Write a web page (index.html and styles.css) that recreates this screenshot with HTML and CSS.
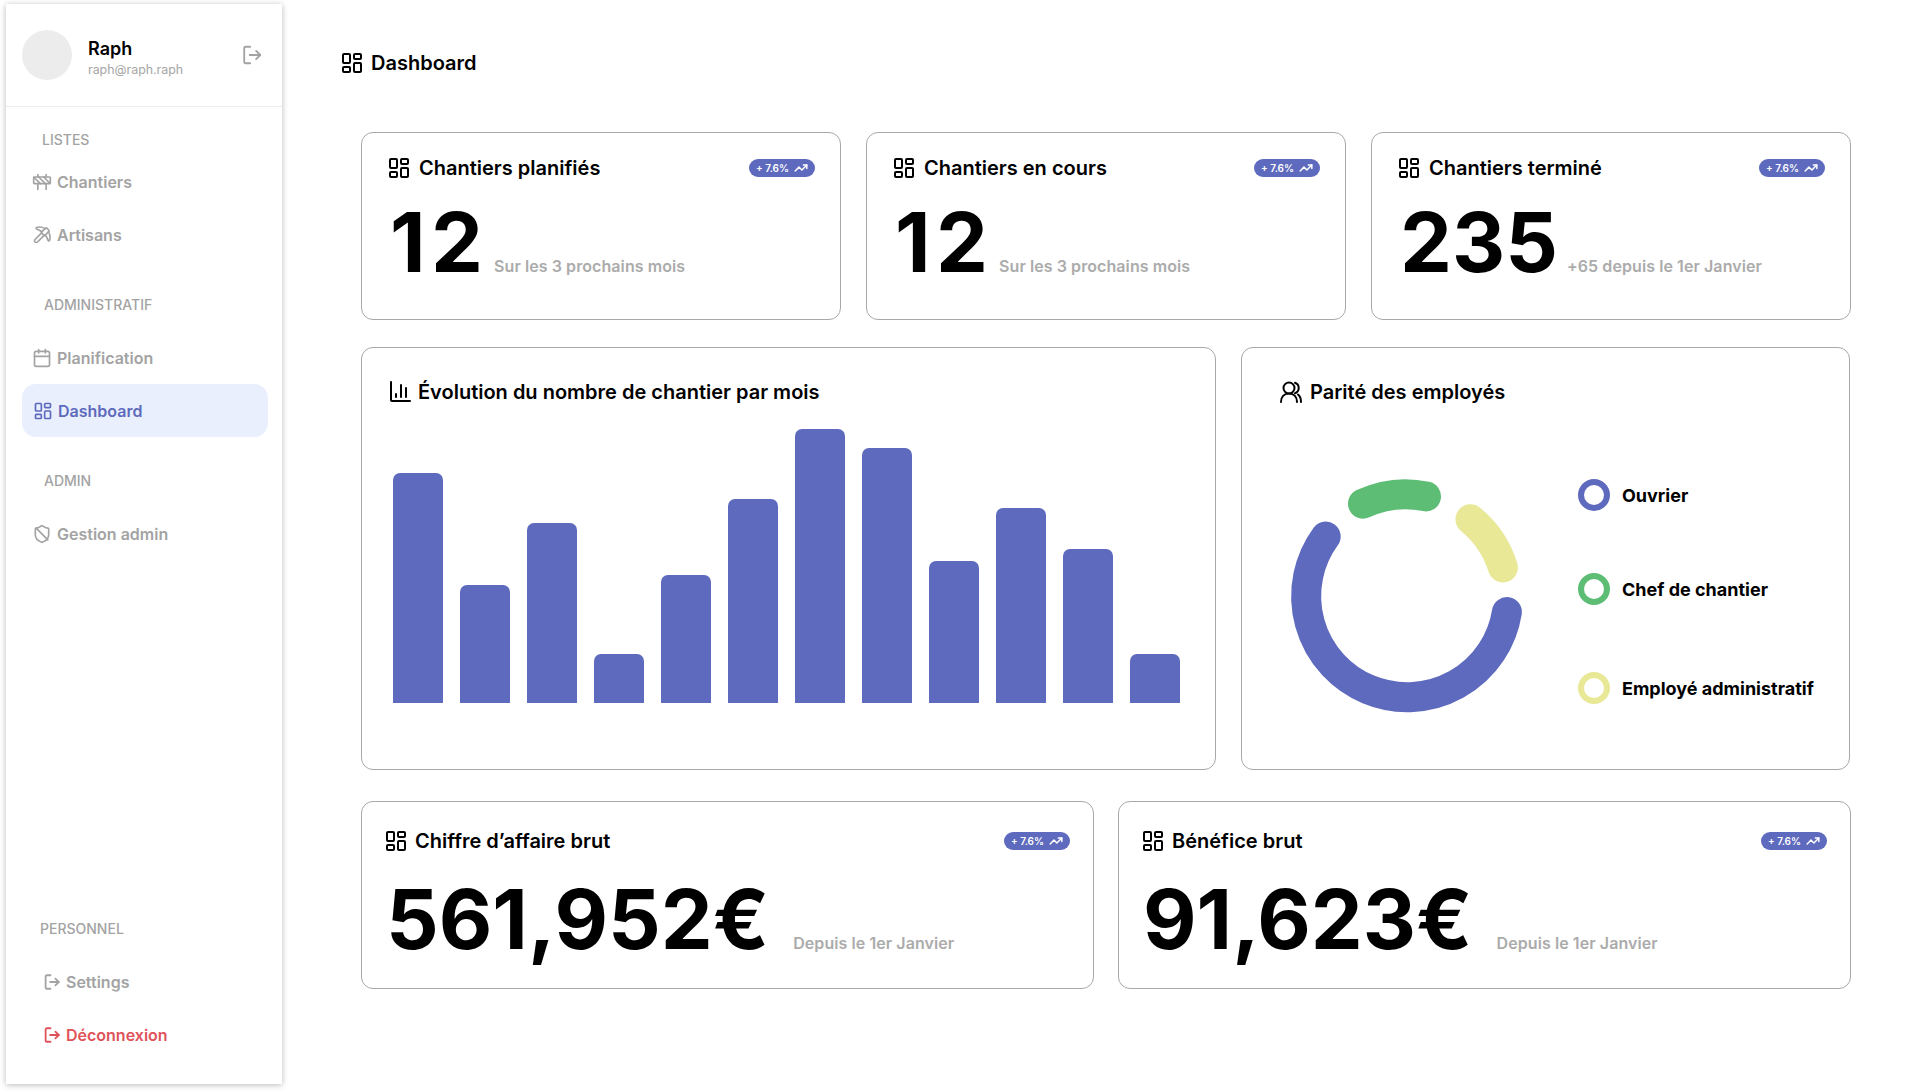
FILE: index.html
```html
<!DOCTYPE html>
<html lang="fr">
<head>
<meta charset="utf-8">
<title>Dashboard</title>
<link rel="stylesheet" href="styles.css">
</head>
<body>
<svg class="defs" width="0" height="0" aria-hidden="true">
  <symbol id="i-grid" viewBox="0 0 24 24"><rect x="3" y="3" width="7" height="9" rx="1"/><rect x="14" y="3" width="7" height="5" rx="1"/><rect x="14" y="12" width="7" height="9" rx="1"/><rect x="3" y="16" width="7" height="5" rx="1"/></symbol>
  <symbol id="i-logout" viewBox="0 0 24 24"><path d="M10 3H5a1.500 1.500 0 0 0-1.500 1.500v15A1.500 1.500 0 0 0 5 21h5"/><path d="M9.500 12H21"/><path d="M16.500 7.500 21 12l-4.500 4.500"/></symbol>
  <symbol id="i-barrier" viewBox="0 0 24 24"><rect x="2" y="6" width="20" height="8" rx="1"/><path d="M17 14v7"/><path d="M7 14v7"/><path d="M17 3v3"/><path d="M7 3v3"/><path d="M10 14 2.300 6.300"/><path d="m14 6 7.700 7.700"/><path d="m8 6 8 8"/></symbol>
  <symbol id="i-pick" viewBox="0 0 24 24"><path d="M14.531 12.469 6.619 20.380a1 1 0 1 1-3-3l7.912-7.912"/><path d="M15.686 4.314A12.500 12.500 0 0 0 5.461 2.958 1 1 0 0 0 5.580 4.710a22 22 0 0 1 6.318 3.393"/><path d="M17.700 3.700a1 1 0 0 0-1.400 0l-4.600 4.600a1 1 0 0 0 0 1.400l2.600 2.600a1 1 0 0 0 1.400 0l4.600-4.600a1 1 0 0 0 0-1.400z"/><path d="M19.686 8.314a12.501 12.501 0 0 1 1.356 10.225 1 1 0 0 1-1.751-.119 22 22 0 0 0-3.393-6.319"/></symbol>
  <symbol id="i-cal" viewBox="0 0 24 24"><rect x="3" y="4" width="18" height="18" rx="2"/><path d="M16 2v4"/><path d="M8 2v4"/><path d="M3 10h18"/></symbol>
  <symbol id="i-shield" viewBox="0 0 24 24"><path d="M20 13c0 5-3.500 7.500-7.660 8.950a1 1 0 0 1-.67-.01C7.500 20.500 4 18 4 13V6a1 1 0 0 1 1-1c2 0 4.500-1.200 6.240-2.720a1.170 1.170 0 0 1 1.520 0C14.510 3.810 17 5 19 5a1 1 0 0 1 1 1z"/><path d="M5 5l14 14"/></symbol>
  <symbol id="i-chart" viewBox="0 0 24 24"><path d="M3 2v18a1 1 0 0 0 1 1h18"/><path d="M8 17v-3"/><path d="M13 17V5"/><path d="M18 17V8"/></symbol>
  <symbol id="i-users" viewBox="0 0 24 24"><circle cx="10" cy="8" r="5.500"/><path d="M2 22c0-5 3-8.500 8-8.500s8 3.500 8 8.500"/><path d="M16 2.800a5.500 5.500 0 0 1 0 10.400"/><path d="M19 14.500c2 1.500 3 4.200 3 7.500"/></symbol>
  <symbol id="i-trend" viewBox="0 0 24 24"><path d="m22 7-8.500 8.500-5-5L2 17"/><path d="M16 7h6v6"/></symbol>
</svg>

<div class="page">
  <aside class="sidebar">
    <div class="profile">
      <div class="avatar"></div>
      <div class="who">
        <div class="who-name">Raph</div>
        <div class="who-mail">raph@raph.raph</div>
      </div>
      <svg class="ico ico-exit"><use href="#i-logout"/></svg>
    </div>

    <div class="nav-group group-listes">
      <div class="nav-label label-listes">LISTES</div>
      <a class="nav-item"><svg class="ico nav-ico"><use href="#i-barrier"/></svg>Chantiers</a>
      <a class="nav-item"><svg class="ico nav-ico"><use href="#i-pick"/></svg>Artisans</a>
    </div>

    <div class="nav-group group-admin">
      <div class="nav-label">ADMINISTRATIF</div>
      <a class="nav-item"><svg class="ico nav-ico"><use href="#i-cal"/></svg>Planification</a>
      <a class="nav-item nav-active"><svg class="ico nav-ico"><use href="#i-grid"/></svg>Dashboard</a>
    </div>

    <div class="nav-group group-sys">
      <div class="nav-label">ADMIN</div>
      <a class="nav-item"><svg class="ico nav-ico"><use href="#i-shield"/></svg>Gestion admin</a>
    </div>

    <div class="nav-group group-perso">
      <div class="nav-label label-perso">PERSONNEL</div>
      <a class="nav-item item-perso"><svg class="ico perso-ico"><use href="#i-logout"/></svg>Settings</a>
      <a class="nav-item item-perso item-danger"><svg class="ico perso-ico"><use href="#i-logout"/></svg>Déconnexion</a>
    </div>
  </aside>

  <main class="main">
    <h1 class="page-title"><svg class="ico ico-title"><use href="#i-grid"/></svg>Dashboard</h1>

    <section class="row row-stats">
      <article class="card stat">
        <header class="stat-head">
          <h2 class="card-title"><svg class="ico ico-title"><use href="#i-grid"/></svg>Chantiers planifiés</h2>
          <span class="badge">+ 7.6% <svg class="ico ico-trend"><use href="#i-trend"/></svg></span>
        </header>
        <div class="stat-body"><span class="value value-spaced">12</span><span class="note">Sur les 3 prochains mois</span></div>
      </article>
      <article class="card stat">
        <header class="stat-head">
          <h2 class="card-title"><svg class="ico ico-title"><use href="#i-grid"/></svg>Chantiers en cours</h2>
          <span class="badge">+ 7.6% <svg class="ico ico-trend"><use href="#i-trend"/></svg></span>
        </header>
        <div class="stat-body"><span class="value value-spaced">12</span><span class="note">Sur les 3 prochains mois</span></div>
      </article>
      <article class="card stat">
        <header class="stat-head">
          <h2 class="card-title"><svg class="ico ico-title"><use href="#i-grid"/></svg>Chantiers terminé</h2>
          <span class="badge">+ 7.6% <svg class="ico ico-trend"><use href="#i-trend"/></svg></span>
        </header>
        <div class="stat-body"><span class="value">235</span><span class="note">+65 depuis le 1er Janvier</span></div>
      </article>
    </section>

    <section class="row row-charts">
      <article class="card chart-card">
        <h2 class="card-title"><svg class="ico ico-title"><use href="#i-chart"/></svg>Évolution du nombre de chantier par mois</h2>
        <div class="bars">
          <div class="bar" style="height:230px"></div>
          <div class="bar" style="height:118px"></div>
          <div class="bar" style="height:180px"></div>
          <div class="bar" style="height:49px"></div>
          <div class="bar" style="height:128px"></div>
          <div class="bar" style="height:204px"></div>
          <div class="bar" style="height:274px"></div>
          <div class="bar" style="height:255px"></div>
          <div class="bar" style="height:142px"></div>
          <div class="bar" style="height:195px"></div>
          <div class="bar" style="height:154px"></div>
          <div class="bar" style="height:49px"></div>
        </div>
      </article>

      <article class="card parity-card">
        <h2 class="card-title"><svg class="ico ico-title"><use href="#i-users"/></svg>Parité des employés</h2>
        <div class="parity-body">
          <svg class="donut" width="240" height="240" viewBox="0 0 240 240" fill="none" stroke-width="30" stroke-linecap="round">
            <path class="arc-blue" d="M219.900 134.100 A101 101 0 1 1 38.700 58.500"/>
            <path class="arc-green" d="M76 25.700 A101 101 0 0 1 139 18.400"/>
            <path class="arc-yellow" d="M183.500 41.300 A101 101 0 0 1 215.900 89.400"/>
          </svg>
          <ul class="legend">
            <li class="legend-item leg-blue"><span class="ring"></span>Ouvrier</li>
            <li class="legend-item leg-green"><span class="ring"></span>Chef de chantier</li>
            <li class="legend-item leg-yellow"><span class="ring"></span>Employé administratif</li>
          </ul>
        </div>
      </article>
    </section>

    <section class="row row-money">
      <article class="card stat money">
        <header class="stat-head">
          <h2 class="card-title"><svg class="ico ico-title"><use href="#i-grid"/></svg>Chiffre d’affaire brut</h2>
          <span class="badge">+ 7.6% <svg class="ico ico-trend"><use href="#i-trend"/></svg></span>
        </header>
        <div class="stat-body"><span class="value">561,952€</span><span class="note">Depuis le 1er Janvier</span></div>
      </article>
      <article class="card stat money">
        <header class="stat-head">
          <h2 class="card-title"><svg class="ico ico-title"><use href="#i-grid"/></svg>Bénéfice brut</h2>
          <span class="badge">+ 7.6% <svg class="ico ico-trend"><use href="#i-trend"/></svg></span>
        </header>
        <div class="stat-body"><span class="value">91,623€</span><span class="note">Depuis le 1er Janvier</span></div>
      </article>
    </section>
  </main>
</div>
</body>
</html>
```

FILE: styles.css
```css
* { box-sizing: border-box; }
html, body { margin: 0; padding: 0; background: #fff; }
body { font-family: Inter, "Liberation Sans", sans-serif; color: #000; height: 1092px; overflow: hidden; }
.defs { position: absolute; }
.page { display: flex; align-items: flex-start; }

.ico { fill: none; stroke: currentColor; stroke-width: 2; stroke-linecap: round; stroke-linejoin: round; flex: none; }

/* Sidebar */
.sidebar {
  width: 276px; height: 1080px; margin: 4px 0 0 6px; background: #fff;
  box-shadow: 0 1px 6px rgba(0,0,0,.28);
  display: flex; flex-direction: column; color: #a3a3a3; flex: none;
}
.profile { height: 103px; display: flex; align-items: center; padding: 0 19px 0 16px; border-bottom: 1px solid #ececec; }
.avatar { width: 50px; height: 50px; border-radius: 50%; background: #ececec; flex: none; }
.who { margin-left: 16px; flex: 1; padding-top: 5px; }
.who-name { font-size: 18px; font-weight: 600; color: #000; line-height: 24px; }
.who-mail { font-size: 12.4px; color: #a6a6a6; line-height: 18px; }
.ico-exit { width: 22px; height: 22px; color: #a3a3a3; }

.nav-group { display: flex; flex-direction: column; padding: 0 14px 0 16px; }
.group-listes { margin-top: 23px; }
.group-admin { margin-top: 34px; }
.group-sys { margin-top: 34px; }
.group-perso { margin-top: auto; margin-bottom: 23px; }
.nav-label { font-size: 14px; font-weight: 500; line-height: 20px; padding-left: 22px; margin-bottom: 16px; color: #a3a3a3; }
.label-listes { padding-left: 20px; margin-bottom: 5px; }
.label-perso { padding-left: 18px; }
.nav-item { height: 53px; display: flex; align-items: center; gap: 5px; padding-left: 10px; font-size: 16px; font-weight: 600; color: #a3a3a3; border-radius: 14px; }
.nav-ico { width: 20px; height: 20px; }
.nav-active { background: #e9effc; color: #5e6abd; padding-left: 11px; }
.item-perso { padding-left: 21px; gap: 5px; }
.perso-ico { width: 18px; height: 18px; stroke-width: 2.4; }
.item-danger { color: #e0525a; }

/* Main */
.main { flex: 1; padding: 0 0 0 58px; min-width: 0; }
.page-title { margin: 48px 0 0; height: 30px; display: flex; align-items: center; gap: 7px; font-size: 20px; font-weight: 600; line-height: 30px; }
.ico-title { width: 24px; height: 24px; }

.row { display: grid; margin-left: 21px; width: 1490px; }
.row-stats { margin-top: 54px; grid-template-columns: repeat(3, 1fr); gap: 25px; }
.row-charts { margin-top: 27px; grid-template-columns: 855px 609px; gap: 25px; }
.row-money { margin-top: 31px; grid-template-columns: 1fr 1fr; gap: 24px; }

.card { background: #fff; border: 1px solid #a8a8a8; border-radius: 12px; }
.card-title { margin: 0; display: flex; align-items: center; gap: 7px; font-size: 20px; font-weight: 600; line-height: 26px; }
.chart-card .card-title { gap: 6px; }

.stat { height: 188px; padding: 22px 25px 0 25px; }
.stat .card-title { gap: 8px; }
.stat-head { display: flex; align-items: center; justify-content: space-between; height: 26px; }
.badge { display: flex; align-items: center; gap: 5px; height: 18px; width: 66px; justify-content: center; border-radius: 9px; background: #5e6abd; color: #fff; font-size: 10px; font-weight: 600; white-space: nowrap; }
.ico-trend { width: 14px; height: 14px; stroke-width: 2.5; }

.stat-body { display: flex; align-items: baseline; gap: 9px; margin-top: 12px; padding-left: 3px; }
.value { font-size: 82.5px; font-weight: 700; line-height: 98px; letter-spacing: 0; }
.value-spaced { letter-spacing: 5.5px; margin-right: -3.5px; }
.note { font-size: 16px; font-weight: 600; color: #ababab; letter-spacing: .08px; }

.money { padding: 26px 23px 0 22px; }
.money .card-title { gap: 7px; }
.money .stat-body { margin-top: 16px; gap: 24px; padding-left: 2px; }

/* Bar chart */
.chart-card { height: 423px; padding: 31px 25px 0 26px; }
.bars { display: flex; align-items: flex-end; gap: 17px; height: 274px; margin-top: 24px; padding-left: 5px; }
.bar { width: 50px; background: #5e6abd; border-radius: 7px 7px 0 0; }

/* Donut */
.parity-card { height: 423px; padding: 31px 25px 0 37px; }
.parity-body { display: flex; margin-top: 73px; }
.donut { margin: 0 0 0 8px; flex: none; }
.arc-blue { stroke: #5e6abd; }
.arc-green { stroke: #5dbd75; }
.arc-yellow { stroke: #e8e897; }
.legend { list-style: none; margin: 0 0 0 51px; padding: 0; flex: 1; }
.legend-item { display: flex; align-items: center; gap: 12px; height: 32px; font-size: 18px; font-weight: 700; white-space: nowrap; }
.leg-blue { margin-top: 1px; }
.leg-green { margin-top: 62px; }
.leg-yellow { margin-top: 67px; }
.ring { width: 32px; height: 32px; border-radius: 50%; border: 6px solid; flex: none; }
.leg-blue .ring { border-color: #5e6abd; }
.leg-green .ring { border-color: #5dbd75; }
.leg-yellow .ring { border-color: #e8e897; }
```
